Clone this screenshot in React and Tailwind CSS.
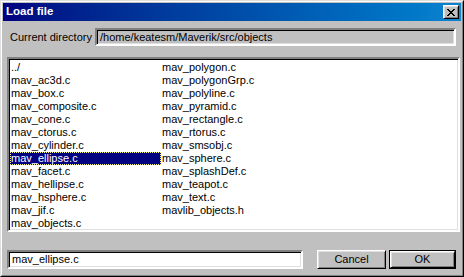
import React from 'react';

const leftCol = [
  '../', 'mav_ac3d.c', 'mav_box.c', 'mav_composite.c', 'mav_cone.c', 'mav_ctorus.c',
  'mav_cylinder.c', 'mav_ellipse.c', 'mav_facet.c', 'mav_hellipse.c', 'mav_hsphere.c',
  'mav_jif.c', 'mav_objects.c',
];
const rightCol = [
  'mav_polygon.c', 'mav_polygonGrp.c', 'mav_polyline.c', 'mav_pyramid.c', 'mav_rectangle.c',
  'mav_rtorus.c', 'mav_smsobj.c', 'mav_sphere.c', 'mav_splashDef.c', 'mav_teapot.c',
  'mav_text.c', 'mavlib_objects.h',
];

const sunken =
  'border-2 border-t-[#808080] border-l-[#808080] border-b-white border-r-white shadow-[inset_1px_1px_0_#000,inset_-1px_-1px_0_#dfdfdf]';
const raised =
  'border border-t-white border-l-white border-b-black border-r-black shadow-[inset_1px_1px_0_#dfdfdf,inset_-1px_-1px_0_#808080]';

export default function App() {
  const items = [...leftCol, ...rightCol];
  return (
    <div className="w-[464px] h-[277px] bg-[#c0c0c0] font-['Liberation_Sans',Arial,sans-serif] text-[11px] text-black overflow-hidden">
      <div className="h-full flex flex-col border border-t-[#dfdfdf] border-l-[#dfdfdf] border-b-black border-r-black">
        <div className="h-full flex flex-col p-[1px] border border-t-white border-l-white border-b-[#808080] border-r-[#808080]">
          {/* title bar */}
          <div className="h-[18px] flex items-center justify-between pl-[3px] pr-[2px] bg-gradient-to-r from-[#000080] to-[#1084d0]">
            <span className="text-white font-bold text-[11.5px] leading-none">Load file</span>
            <div className={`w-[16px] h-[14px] bg-[#c0c0c0] flex items-center justify-center ${raised}`}>
              <svg width="8" height="7" viewBox="0 0 8 7">
                <path d="M0 0h2v1h-2zM6 0h2v1h-2zM1 1h2v1h-2zM5 1h2v1h-2zM2 2h4v1h-4zM3 3h2v1h-2zM2 4h4v1h-4zM1 5h2v1h-2zM5 5h2v1h-2zM0 6h2v1h-2zM6 6h2v1h-2z" fill="#000" />
              </svg>
            </div>
          </div>

          {/* current directory */}
          <div className="mt-[7px] flex items-center pl-[7px] pr-[5px]">
            <span className="w-[85px] leading-none">Current directory</span>
            <div className={`flex-1 h-[18px] flex items-center pl-[3px] bg-[#c0c0c0] ${sunken}`}>
              <span className="leading-none">/home/keatesm/Maverik/src/objects</span>
            </div>
          </div>

          {/* file list */}
          <div className={`mt-[11px] ml-[4px] mr-[1px] h-[175px] bg-white pt-[2px] pl-[1px] ${sunken}`}>
            <div className="grid grid-flow-col grid-rows-[repeat(13,13px)] grid-cols-[151px_151px]">
              {items.map((name) =>
                name === 'mav_ellipse.c' ? (
                  <div
                    key={name}
                    className="bg-[#000080] text-white pl-[1px] leading-[13px] outline-1 outline-dotted outline-offset-[-1px] outline-[#ffff80]"
                  >
                    {name}
                  </div>
                ) : (
                  <div key={name} className="pl-[1px] leading-[13px] whitespace-nowrap">
                    {name}
                  </div>
                )
              )}
            </div>
          </div>

          {/* bottom row */}
          <div className="mt-[18px] flex items-center pl-[4px]">
            <div className={`w-[296px] h-[19px] bg-white flex items-center pl-[3px] ${sunken}`}>
              <span className="leading-none">mav_ellipse.c</span>
            </div>
            <button className={`ml-[14px] w-[69px] h-[19px] bg-[#c0c0c0] leading-none ${raised}`}>
              Cancel
            </button>
            <div className="ml-[3px] w-[67px] h-[19px] border border-black">
              <button className={`w-full h-full bg-[#c0c0c0] leading-none ${raised}`}>OK</button>
            </div>
          </div>
        </div>
      </div>
    </div>
  );
}
